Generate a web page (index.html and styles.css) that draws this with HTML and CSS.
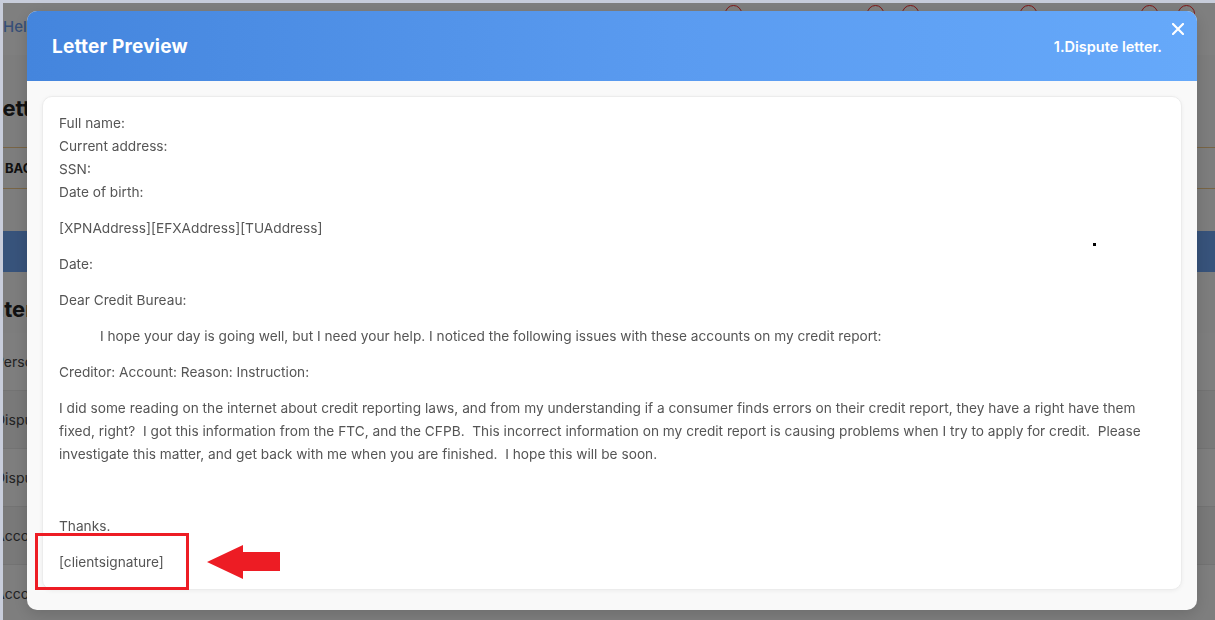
FILE: index.html
```html
<!DOCTYPE html>
<html lang="en">
<head>
    <meta charset="UTF-8">
    <meta name="viewport" content="width=device-width, initial-scale=1.0">
    <title>Letters</title>
    <link rel="stylesheet" href="styles.css">
</head>
<body>

<!-- page behind the dialog -->
<div class="page">
    <nav class="topbar">
        <a href="#" class="help-link">Help</a>
        <div class="nav-icons">
            <span class="badge" style="margin-left: 720px">2</span>
            <span class="badge" style="margin-left: 125px">3</span>
            <span class="badge" style="margin-left: 18px">4</span>
            <span class="badge" style="margin-left: 101px">1</span>
            <span class="badge" style="margin-left: 104px">17</span>
            <span class="badge" style="margin-left: 20px">1</span>
        </div>
    </nav>

    <div class="content">
        <h1 class="page-title">Letters</h1>
        <div class="toolbar">
            <button class="back-btn">BACK</button>
        </div>
        <div class="blue-bar"></div>
        <h2 class="section-title">Sentences</h2>
        <table class="letter-table">
            <tr><td>Personal info</td><td></td></tr>
            <tr><td>Dispute letter</td><td></td></tr>
            <tr><td>Dispute letter</td><td></td></tr>
            <tr><td>Account letter</td><td></td></tr>
            <tr><td>Account letter</td><td></td></tr>
        </table>
    </div>
</div>

<div class="overlay"></div>

<!-- Letter preview dialog -->
<div class="modal">
    <div class="modal-header">
        <h3 class="modal-title">Letter Preview</h3>
        <span class="modal-subtitle">1.Dispute letter.</span>
        <button class="close-btn" aria-label="Close">
            <svg width="12" height="12" viewBox="0 0 12 12">
                <path d="M1 1 L11 11 M11 1 L1 11" stroke="#fff" stroke-width="2.2" stroke-linecap="round"/>
            </svg>
        </button>
    </div>
    <div class="modal-body">
        <div class="letter">
            <p>Full name:<br>Current address:<br>SSN:<br>Date of birth:</p>
            <p>[XPNAddress][EFXAddress][TUAddress]</p>
            <p>Date:</p>
            <p>Dear Credit Bureau:</p>
            <p class="indent">I hope your day is going well, but I need your help. I noticed the following issues with these accounts on my credit report:</p>
            <p>Creditor: Account: Reason: Instruction:</p>
            <p>I did some reading on the internet about credit reporting laws, and from my understanding if a consumer finds errors on their credit report, they have a right have them fixed, right?&nbsp; I got this information from the FTC, and the CFPB.&nbsp; This incorrect information on my credit report is causing problems when I try to apply for credit.&nbsp; Please investigate this matter, and get back with me when you are finished.&nbsp; I hope this will be soon.</p>
            <p>&nbsp;</p>
            <p>Thanks.</p>
            <p>[clientsignature]</p>
            <span class="cursor-dot"></span>
        </div>

        <!-- highlight around the signature placeholder -->
        <div class="mark-box"></div>
        <svg class="mark-arrow" width="73" height="34" viewBox="0 0 73 34">
            <polygon points="0,17 36,0 36,7 73,7 73,26 36,26 36,34" fill="#ed1c24"/>
        </svg>
    </div>
</div>

</body>
</html>
```

FILE: styles.css
```css
/* Base */
body {
    margin: 0;
    font-family: "Inter", "Open Sans", sans-serif;
    background: #fff;
    overflow: hidden;
    height: 620px;
    border-top: 3px solid #c8cddb;
    border-left: 3px solid #c8cddb;
    box-sizing: border-box;
}

/* Page underneath */
.page {
    background: #fafafa;
    height: 617px;
}

.topbar {
    height: 52px;
    background: #fff;
    display: flex;
    align-items: flex-start;
}

.help-link {
    color: #6c9ef0;
    text-decoration: none;
    font-size: 15px;
    font-weight: 500;
    margin-top: 14px;
}

.nav-icons {
    display: flex;
    margin-left: -31px;
}

.badge {
    width: 15px;
    height: 15px;
    border: 1.5px solid #ff2d2d;
    border-radius: 50%;
    font-size: 8px;
    color: #ff2d2d;
    display: flex;
    align-items: center;
    justify-content: center;
    margin-top: 2px;
}

.page-title {
    margin: 40px 0 0 -13px;
    font-size: 22px;
    font-weight: 700;
    color: #222;
    height: 40px;
}

.toolbar {
    margin-top: 12px;
    height: 40px;
    border-top: 1px solid #f0c98a;
    border-bottom: 1px solid #f0c98a;
    display: flex;
    align-items: center;
}

.back-btn {
    border: none;
    background: none;
    font-family: inherit;
    font-weight: 700;
    font-size: 13px;
    color: #222;
    padding: 0 0 0 2px;
}

.blue-bar {
    margin-top: 42px;
    height: 41px;
    background: #6fa6f6;
}

.section-title {
    margin: 24px 0 0 -40px;
    font-size: 22px;
    font-weight: 700;
    color: #222;
    height: 32px;
}

.letter-table {
    width: 100%;
    border-collapse: collapse;
    margin-top: 5px;
}

.letter-table td {
    height: 57px;
    border-bottom: 1px solid #e6e6e6;
    font-size: 14px;
    color: #444;
    padding: 0;
    text-indent: -8px;
}

.letter-table tr:nth-child(odd) td {
    background: #fdfdfd;
}

.letter-table tr:nth-child(even) td {
    background: #f3f3f3;
}

/* Dim layer */
.overlay {
    position: fixed;
    top: 3px;
    left: 3px;
    right: 0;
    bottom: 0;
    background: rgba(0, 0, 0, 0.5);
}

/* Dialog */
.modal {
    position: fixed;
    top: 11px;
    left: 27px;
    width: 1170px;
    height: 599px;
    background: #f9f9f9;
    border-radius: 10px;
    display: flex;
    flex-direction: column;
    overflow: hidden;
    box-shadow: 0 4px 16px rgba(0, 0, 0, 0.15);
}

.modal-header {
    position: relative;
    height: 70px;
    flex-shrink: 0;
    display: flex;
    align-items: center;
    justify-content: space-between;
    padding: 0 35px 0 25px;
    background: linear-gradient(90deg, #4485dd 0%, #5a9bf0 55%, #66a9fa 100%);
    color: #fff;
}

.modal-title {
    margin: 0;
    font-size: 19px;
    font-weight: 700;
    letter-spacing: 0.2px;
}

.modal-subtitle {
    font-size: 14.5px;
    font-weight: 600;
    margin-top: 1px;
}

.close-btn {
    position: absolute;
    top: 12px;
    right: 13px;
    border: none;
    background: none;
    padding: 0;
    width: 12px;
    height: 12px;
    display: flex;
    cursor: pointer;
}

.modal-body {
    position: relative;
    flex: 1;
    min-height: 0;
    padding: 15px 15px 20px;
    display: flex;
}

.letter {
    position: relative;
    flex: 1;
    min-height: 0;
    overflow: hidden;
    background: #fff;
    border: 1px solid #ececec;
    border-radius: 10px;
    box-shadow: 0 1px 4px rgba(0, 0, 0, 0.05);
    padding: 15px 16px 0;
    font-size: 13.7px;
    line-height: 23px;
    color: #555;
}

.letter p {
    margin: 0 0 13px;
}

.letter .indent {
    text-indent: 41px;
}

.cursor-dot {
    position: absolute;
    left: 1050px;
    top: 146px;
    width: 3px;
    height: 3px;
    background: #000;
}

/* Annotation over the signature line */
.mark-box {
    position: absolute;
    left: 8px;
    top: 452px;
    width: 148px;
    height: 51px;
    border: 3px solid #ed1c24;
}

.mark-arrow {
    position: absolute;
    left: 180px;
    top: 464px;
}
```
